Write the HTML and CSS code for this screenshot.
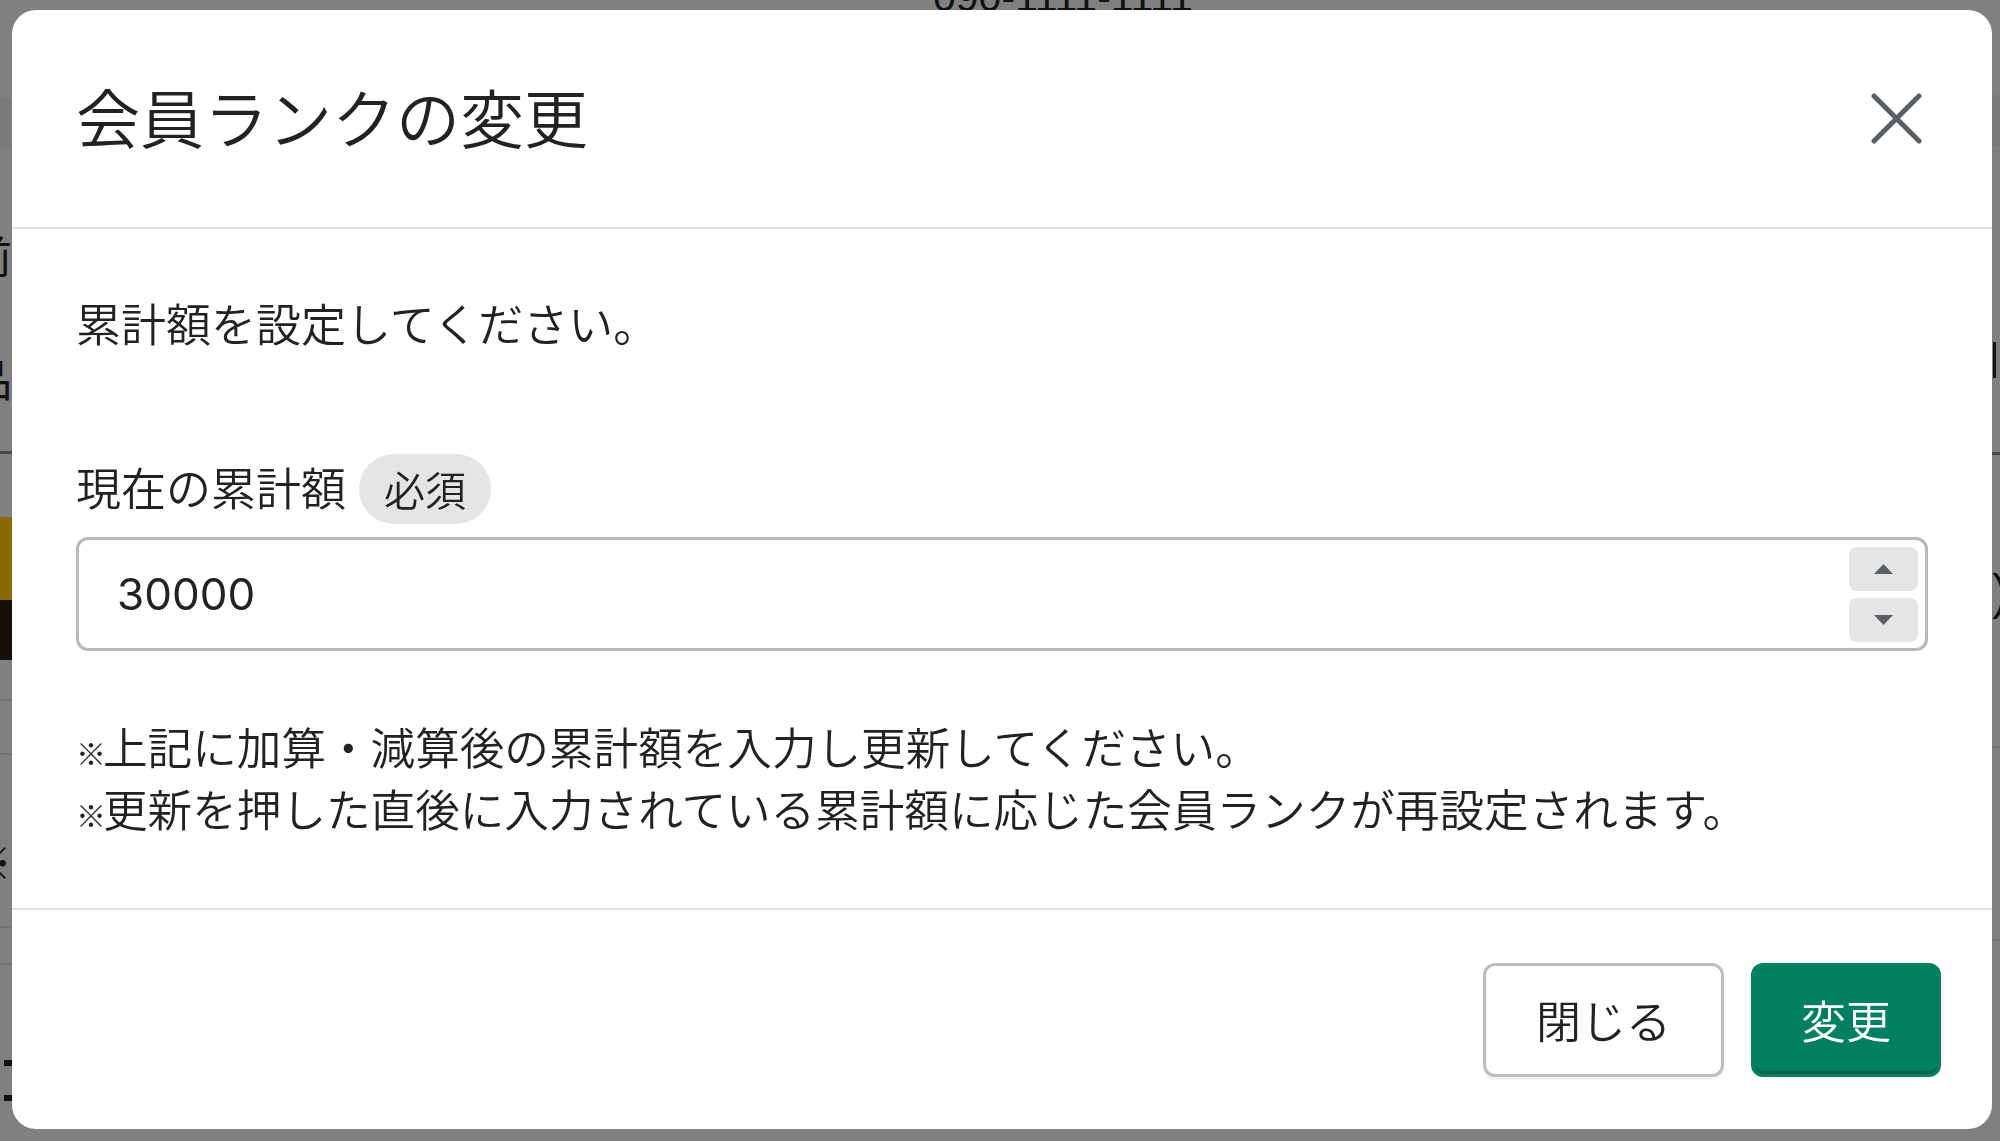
FILE: index.html
```html
<!DOCTYPE html>
<html lang="ja">
<head>
<meta charset="utf-8">
<title>会員ランクの変更</title>
<link rel="stylesheet" href="styles.css">
</head>
<body>
<div class="page">
  <div class="edge edge-left">
    <div class="sp" style="height:98px"></div>
    <div class="band" style="height:50px"></div>
    <div class="sp" style="height:84px"></div>
    <div class="glyph g-a">前</div>
    <div class="sp" style="height:77px"></div>
    <div class="glyph g-b">品</div>
    <div class="sp" style="height:50px"></div>
    <div class="rule dark"></div>
    <div class="sp" style="height:63px"></div>
    <div class="photo"></div>
    <div class="sp" style="height:39px"></div>
    <div class="rule"></div>
    <div class="sp" style="height:52px"></div>
    <div class="rule"></div>
    <div class="sp" style="height:83px"></div>
    <div class="glyph g-c">※</div>
    <div class="sp" style="height:42px"></div>
    <div class="rule"></div>
    <div class="sp" style="height:35px"></div>
    <div class="rule"></div>
    <div class="sp" style="height:95px"></div>
    <div class="dash"></div>
    <div class="sp" style="height:29px"></div>
    <div class="dash"></div>
  </div>
  <div class="page-center">
    <div class="phone">090-1111-1111</div>
  </div>
  <div class="edge edge-right">
    <div class="sp" style="height:95px"></div>
    <div class="band" style="height:51px"></div>
    <div class="sp" style="height:196px"></div>
    <div class="bar"></div>
    <div class="sp" style="height:74px"></div>
    <div class="rule dark"></div>
    <div class="sp" style="height:112px"></div>
    <div class="glyph g-d">)</div>
    <div class="sp" style="height:128px"></div>
    <div class="rule"></div>
    <div class="sp" style="height:191px"></div>
    <div class="rule"></div>
  </div>
</div>

<div class="modal" role="dialog" aria-labelledby="modal-title">
  <div class="modal-header">
    <h2 class="modal-title" id="modal-title">会員ランクの変更</h2>
    <button class="close" type="button" aria-label="閉じる">
      <svg width="51" height="51" viewBox="0 0 51 51" aria-hidden="true"><path d="M3 3 L48 48 M48 3 L3 48" stroke="#5c5f62" stroke-width="5" stroke-linecap="round" fill="none"/></svg>
    </button>
  </div>
  <div class="modal-body">
    <p class="lead">累計額を設定してください。</p>
    <div class="label-row">
      <span class="label">現在の累計額</span>
      <span class="badge">必須</span>
    </div>
    <div class="field">
      <span class="value">30000</span>
      <div class="spinner">
        <span class="spin"><svg width="19" height="10" viewBox="0 0 19 10" aria-hidden="true"><polygon points="0,10 9.5,0 19,10" fill="#5c5f62"/></svg></span>
        <span class="spin"><svg width="19" height="10" viewBox="0 0 19 10" aria-hidden="true"><polygon points="0,0 19,0 9.5,10" fill="#5c5f62"/></svg></span>
      </div>
    </div>
    <div class="notes">
      <p><span class="mark">※</span>上記に加算・減算後の累計額を入力し更新してください。</p>
      <p><span class="mark">※</span>更新を押した直後に入力されている累計額に応じた会員ランクが再設定されます。</p>
    </div>
  </div>
  <div class="modal-footer">
    <button class="btn btn-secondary" type="button">閉じる</button>
    <button class="btn btn-primary" type="button">変更</button>
  </div>
</div>
</body>
</html>
```

FILE: styles.css
```css
* { box-sizing: border-box; }

html, body {
  margin: 0;
  padding: 0;
  width: 2000px;
  height: 1141px;
  overflow: hidden;
}

body {
  background: #808080;
  font-family: "Noto Sans CJK JP", "Noto Sans", sans-serif;
  font-weight: 350;
  color: #202223;
}

/* dimmed page behind the dialog */
.page {
  display: flex;
  height: 1141px;
}

.edge {
  display: flex;
  flex-direction: column;
  overflow: hidden;
  flex: none;
}

.edge-left { width: 12px; align-items: flex-end; }
.edge-right { width: 8px; align-items: flex-start; }

.sp { flex: none; width: 100%; }
.band { flex: none; width: 100%; background: #7a7a7a; }

.rule { flex: none; width: 100%; height: 2px; background: #727272; }
.rule.dark { background: #4a4a4a; height: 3px; }

.glyph {
  flex: none;
  height: 46px;
  line-height: 46px;
  font-size: 44px;
  font-weight: 400;
  color: #111;
  white-space: nowrap;
}
.g-d { font-family: "Liberation Sans", sans-serif; font-size: 50px; height: 51px; line-height: 51px; }

.photo {
  flex: none;
  width: 100%;
  height: 143px;
  background: linear-gradient(#8a6a00 0, #8a6a00 58%, #15110a 58%, #15110a 100%);
}

.bar { flex: none; width: 3px; height: 36px; background: #151515; margin-left: 1px; }

.dash { flex: none; width: 8px; height: 6px; background: #111; }

.page-center { flex: 1; overflow: hidden; }

.phone {
  font-family: "Liberation Sans", sans-serif;
  font-weight: 400;
  font-size: 41px;
  line-height: 41px;
  margin-top: -23px;
  padding-left: 921px;
  color: #111;
  white-space: nowrap;
}

/* dialog */
.modal {
  position: fixed;
  top: 10px;
  left: 12px;
  width: 1980px;
  background: #fff;
  border-radius: 24px;
  overflow: hidden;
}

.modal-header {
  display: flex;
  align-items: center;
  justify-content: space-between;
  height: 219px;
  padding: 0 70px 0 64px;
  border-bottom: 2px solid #e1e3e5;
}

.modal-title {
  margin: 0 0 5px;
  font-size: 64px;
  font-weight: 350;
  line-height: 1.4;
  color: #202223;
}

.close {
  display: flex;
  padding: 0;
  border: 0;
  background: none;
  width: 51px;
  height: 51px;
}

.modal-body {
  padding: 62px 64px 69px;
}

.lead {
  margin: 0 0 100px;
  font-size: 45px;
  line-height: 63px;
}

.label-row {
  display: flex;
  align-items: center;
  height: 70px;
  margin-bottom: 13px;
}

.label {
  font-size: 45px;
  line-height: 63px;
  padding-bottom: 5px;
}

.badge {
  margin-left: 13px;
  padding: 5px 25px 7px;
  font-size: 41px;
  line-height: 58px;
  background: #e4e5e7;
  border-radius: 35px;
  color: #202223;
}

.field {
  display: flex;
  align-items: center;
  height: 114px;
  border: 3px solid #b5babf;
  border-radius: 12px;
  padding: 0 7px 0 38px;
}

.value {
  flex: 1;
  font-family: "Inter", "Noto Sans", sans-serif;
  font-weight: 400;
  font-size: 44px;
  line-height: 63px;
  color: #202223;
}

.spinner {
  display: flex;
  flex-direction: column;
  gap: 7px;
}

.spin {
  display: flex;
  align-items: center;
  justify-content: center;
  width: 69px;
  height: 44px;
  background: #e4e5e7;
  border-radius: 8px;
}

.notes {
  margin-top: 64px;
}

.notes p {
  margin: 0;
  font-size: 44.6px;
  line-height: 62px;
}

.mark {
  font-size: 30px;
  line-height: 1;
  margin-right: -3px;
}

.modal-footer {
  display: flex;
  justify-content: flex-end;
  gap: 27px;
  padding: 53px 51px 52px;
  border-top: 2px solid #e1e3e5;
}

.btn {
  height: 114px;
  font-family: "Noto Sans CJK JP", "Noto Sans", sans-serif;
  font-weight: 350;
  font-size: 45px;
  line-height: 1;
  border-radius: 12px;
  border: 3px solid #babfc3;
  padding-bottom: 3px;
  cursor: pointer;
}

.btn-secondary {
  padding-left: 50px;
  padding-right: 50px;
  background: #fff;
  color: #202223;
  box-shadow: 0 3px 0 rgba(0, 0, 0, 0.05);
}

.btn-primary {
  padding-left: 47px;
  padding-right: 47px;
  background: #008060;
  border-color: #008060;
  color: #fff;
  box-shadow: inset 0 -3px 0 rgba(0, 0, 0, 0.2);
}
```
